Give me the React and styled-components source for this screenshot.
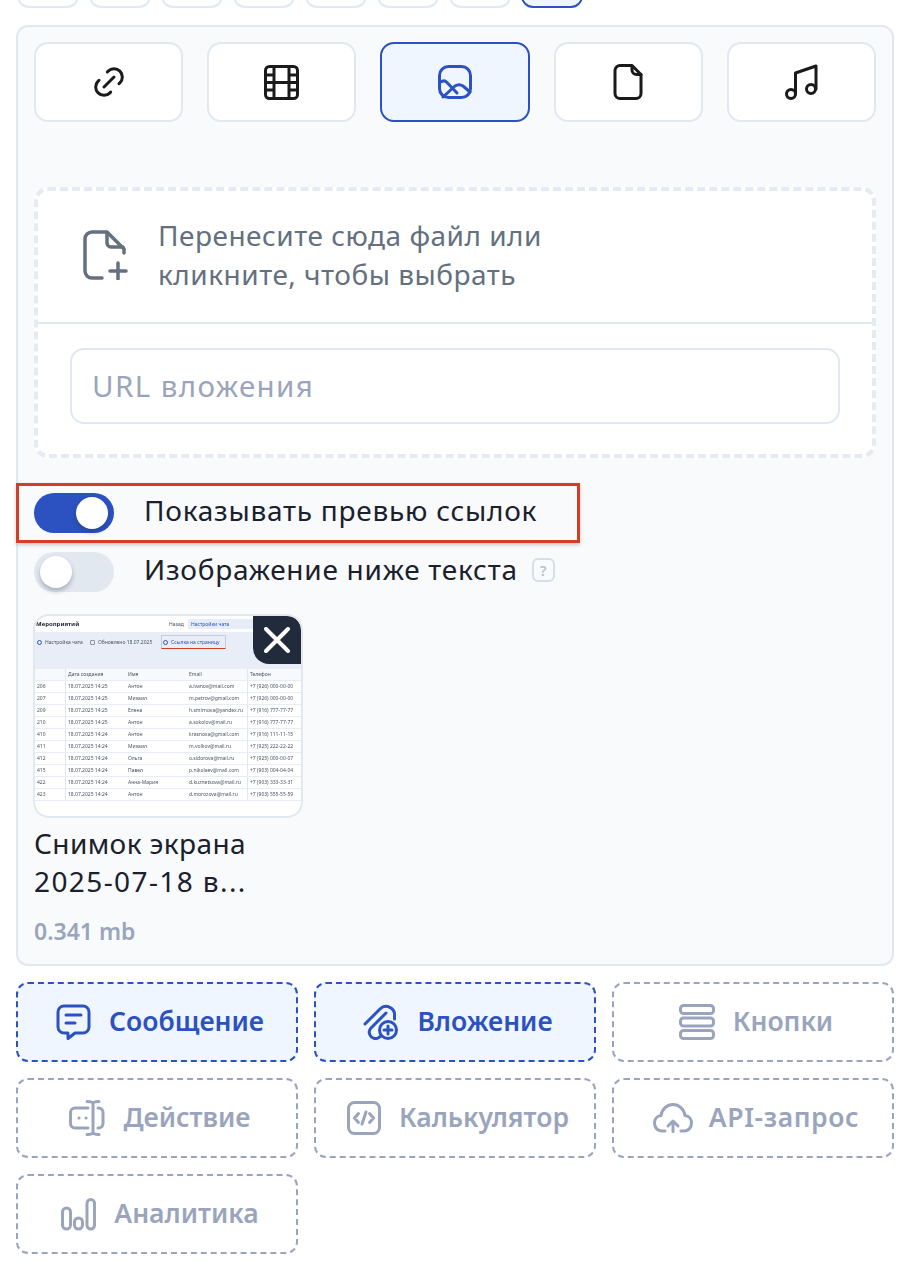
import styled, { createGlobalStyle } from "styled-components";

const BLUE = "#2b52c0";
const GREY = "#9aa5bd";

const GlobalStyle = createGlobalStyle`
  html, body {
    margin: 0;
    padding: 0;
    background: #fff;
  }
  * { box-sizing: border-box; }
  body {
    font-family: "Noto Sans", "Open Sans", sans-serif;
    color: #1a202c;
  }
`;

const Page = styled.div`
  width: 918px;
  height: 1288px;
  padding: 0 24px 0 16px;
  overflow: hidden;
`;

const TabStrip = styled.div`
  height: 8px;
  display: flex;
  align-items: flex-end;
  gap: 10px;
  padding-left: 1px;
  overflow: hidden;
`;

const Tab = styled.div`
  flex: none;
  width: 62px;
  height: 30px;
  border-radius: 12px;
  border: 2px solid ${(p) => (p.$active ? BLUE : "#e2e8f0")};
  background: ${(p) => (p.$active ? "#eff6ff" : "#fff")};
`;

const Panel = styled.div`
  margin-top: 17px;
  height: 941px;
  padding: 15px 16px 0;
  border: 2px solid #e2e8f0;
  border-radius: 12px;
  background: #f8fafc;
`;

const TypeRow = styled.div`
  display: flex;
  gap: 24px;
`;

const TypeButton = styled.div`
  flex: 1;
  height: 80px;
  display: flex;
  align-items: center;
  justify-content: center;
  border-radius: 14px;
  border: 2px solid ${(p) => (p.$active ? BLUE : "#e2e8f0")};
  background: ${(p) => (p.$active ? "#eff6ff" : "#fff")};
  color: ${(p) => (p.$active ? BLUE : "#1a1a1a")};
`;

const DropZone = styled.div`
  margin-top: 65px;
  height: 271px;
  border: 4px dashed #e6eaf2;
  border-radius: 14px;
  background: #fff;
`;

const DropTop = styled.div`
  height: 133px;
  display: flex;
  align-items: center;
  gap: 30px;
  padding: 0 0 4px 45px;
  border-bottom: 2px solid #e2e8f0;
  color: #64707f;
`;

const DropText = styled.div`
  font-size: 28px;
  line-height: 38.5px;
  letter-spacing: 0.5px;
  color: #64707f;
`;

const UrlInput = styled.div`
  margin: 24px 32px 0;
  height: 76px;
  display: flex;
  align-items: center;
  padding: 0 20px 2px;
  border: 2px solid #e2e8f0;
  border-radius: 14px;
  font-size: 29.5px;
  letter-spacing: 1.4px;
  color: ${GREY};
`;

const ToggleList = styled.div`
  margin-top: 35px;
  display: flex;
  flex-direction: column;
  gap: 19px;
`;

const ToggleRow = styled.div`
  position: relative;
  height: 40px;
  display: flex;
  align-items: center;
  gap: 30px;
`;

const Toggle = styled.div`
  position: relative;
  flex: none;
  width: 80px;
  height: 40px;
  border-radius: 20px;
  background: ${(p) => (p.$on ? BLUE : "#e2e8f0")};
`;

const Knob = styled.div`
  position: absolute;
  top: 4px;
  left: ${(p) => (p.$on ? "42px" : "6px")};
  width: 32px;
  height: 32px;
  border-radius: 50%;
  background: #fff;
  box-shadow: 0 3px 5px rgba(30, 41, 59, 0.3);
`;

const ToggleLabel = styled.span`
  margin-top: -6px;
  font-size: 28px;
  line-height: 38px;
  letter-spacing: 0.75px;
  color: #1a202c;
`;

const HelpMark = styled.span`
  flex: none;
  width: 23px;
  height: 24px;
  margin: -4px 0 0 -16px;
  display: flex;
  align-items: center;
  justify-content: center;
  border: 2px solid #d5dde8;
  border-radius: 6px;
  font-size: 14px;
  font-weight: 600;
  color: #b4bfce;
`;

const Annotation = styled.div`
  position: absolute;
  left: -18px;
  top: -10px;
  width: 564px;
  height: 60px;
  border: 3px solid #d23f26;
  box-shadow: 0 2px 4px rgba(0, 0, 0, 0.2);
  pointer-events: none;
`;

const Thumb = styled.div`
  position: relative;
  margin: 22px 0 0 -1px;
  width: 270px;
  height: 204px;
  border: 2px solid #e2e8f0;
  border-radius: 16px;
  background: #fff;
  overflow: hidden;
`;

const ThumbShot = styled.div`
  font-size: 5px;
  line-height: 11px;
  white-space: nowrap;
  color: #4a5463;
  filter: blur(0.35px);
`;

const ThumbTop = styled.div`
  height: 16px;
  display: flex;
  align-items: center;
  padding-left: 1px;
  font-size: 6px;
`;

const ThumbTitle = styled.span`
  width: 133px;
  font-weight: 700;
  color: #1a202c;
`;

const ThumbBack = styled.span`
  width: 19px;
  font-size: 5px;
`;

const ThumbChip = styled.span`
  width: 66px;
  padding-left: 3px;
  background: #e6ecf8;
  color: #2b52c0;
  font-size: 5px;
  line-height: 10px;
`;

const ThumbBand = styled.div`
  height: 37px;
  padding: 3px 0 0 1px;
  display: flex;
  align-items: flex-start;
  background: #e8edf7;
`;

const ThumbAction = styled.span`
  width: ${(p) => p.$w}px;
  height: 14px;
  display: flex;
  align-items: center;
  gap: 3px;
  padding-left: 1px;
  ${(p) => (p.$marked ? "border: 1px solid #c4ccd9; border-bottom: 1px solid #d23f26; color: #2b52c0;" : "")}
`;

const ThumbDot = styled.i`
  flex: none;
  width: 5px;
  height: 5px;
  border: 1px solid ${(p) => p.$color};
  border-radius: ${(p) => (p.$square ? "1px" : "50%")};
`;

const ThumbRow = styled.div`
  display: grid;
  grid-template-columns: 30px 61px 61px 60px 1fr;
  height: 12px;
  background: ${(p) => (p.$head ? "#f7f9fc" : "#fff")};
  border-bottom: 1px solid #e8edf5;
`;

const ThumbCell = styled.span`
  overflow: hidden;
  padding-left: 2px;
  &:nth-child(2), &:nth-child(5) {
    border-left: 1px solid #e1e6f0;
  }
`;

const CloseButton = styled.div`
  position: absolute;
  top: 0;
  right: 0;
  width: 48px;
  height: 48px;
  display: flex;
  align-items: center;
  justify-content: center;
  background: #222b3c;
  border-radius: 0 14px 0 16px;
  color: #fff;
`;

const FileName = styled.div`
  margin-top: 6px;
  font-size: 28px;
  line-height: 38px;
  letter-spacing: 0.4px;
  color: #1a202c;
`;

const FileDate = styled.span`
  letter-spacing: 1.4px;
`;

const FileSize = styled.div`
  margin-top: 16px;
  font-size: 23px;
  line-height: 30px;
  font-weight: 600;
  color: ${GREY};
`;

const BlockGrid = styled.div`
  margin-top: 16px;
  display: grid;
  grid-template-columns: repeat(3, 1fr);
  grid-auto-rows: 80px;
  gap: 16px;
`;

const BlockButton = styled.div`
  display: flex;
  align-items: center;
  justify-content: center;
  gap: 18px;
  padding-left: 6px;
  border: 2px dashed ${(p) => (p.$active ? BLUE : GREY)};
  border-radius: 12px;
  background: ${(p) => (p.$active ? "#eff6ff" : "#fff")};
  color: ${(p) => (p.$active ? BLUE : GREY)};
  font-size: 26.5px;
  font-weight: 600;
`;

const BlockLabel = styled.span`
  margin-top: -3px;
  letter-spacing: ${(p) => (p.$wide ? "0.6px" : "0")};
  margin-left: ${(p) => (p.$wide ? "-2px" : "0")};
`;

function Svg({ w, h, vw, vh, sw = 3, children }) {
  return (
    <svg width={w} height={h} viewBox={`0 0 ${vw || w} ${vh || h}`} fill="none" stroke="currentColor"
      strokeWidth={sw} strokeLinecap="round" strokeLinejoin="round" style={{ flex: "none" }}>
      {children}
    </svg>
  );
}

const LinkIcon = () => (
  <Svg w={40} h={40} vw={24} vh={24} sw={1.8}>
    <path d="M9 15l6-6" />
    <path d="M11 6l.463-.536a5 5 0 0 1 7.071 7.072L18 13" />
    <path d="M13 18l-.397.534a5.068 5.068 0 0 1-7.127 0a4.972 4.972 0 0 1 0-7.071L6 11" />
  </Svg>
);

const FilmIcon = () => (
  <Svg w={35} h={35}>
    <rect x="1.5" y="1.5" width="32" height="32" rx="4" />
    <path d="M10 2V33M25 2V33M10 17.5H25M2 10H10M2 17.5H10M2 25H10M25 10H33M25 17.5H33M25 25H33" />
  </Svg>
);

const ImageIcon = () => (
  <Svg w={34} h={34}>
    <rect x="1.5" y="1.5" width="31" height="31" rx="9" />
    <path d="M2 17L5 16Q7 15.500 8.500 17L19 28" />
    <path d="M5 32L17 21Q21 18.500 25 21L32 27" />
  </Svg>
);

const FileIcon = () => (
  <Svg w={30} h={36}>
    <path d="M19 1.5H7A5 5 0 0 0 2 6.5V29.500A5 5 0 0 0 7 34.500H23A5 5 0 0 0 28 29.500V10.500Z" />
    <path d="M19 2V6A4.500 4.500 0 0 0 23.500 10.500H28" />
  </Svg>
);

const MusicIcon = () => (
  <Svg w={34} h={36}>
    <circle cx="7" cy="30" r="4.500" />
    <circle cx="27" cy="25" r="4.500" />
    <path d="M11.500 30V9L32 2V25" />
  </Svg>
);

const FilePlusIcon = () => (
  <Svg w={45} h={50} sw={3.5}>
    <path d="M19 48H9A7 7 0 0 1 2 41V9A7 7 0 0 1 9 2H24L41 19V23" />
    <path d="M24 3V13A4 4 0 0 0 28 17H40" />
    <path d="M27 41H43M35 33V49" />
  </Svg>
);

const MessageIcon = () => (
  <Svg w={35} h={36}>
    <path d="M8 2H27A6 6 0 0 1 33 8V23A6 6 0 0 1 27 29H19L12 34.500V29H8A6 6 0 0 1 2 23V8A6 6 0 0 1 8 2Z" />
    <path d="M10 11H25M10 19H19" />
  </Svg>
);

const AttachIcon = () => (
  <Svg w={36} h={36}>
    <path d="M2 20L17 5A8.500 8.500 0 0 1 31.500 12V15" />
    <path d="M23 9L8 24A6 6 0 0 0 7 31A6 6 0 0 0 15 34L18 32" />
    <circle cx="25" cy="26" r="8.500" />
    <path d="M25 22V30M21 26H29" />
  </Svg>
);

const RowsIcon = () => (
  <Svg w={36} h={36}>
    <rect x="1.500" y="1.500" width="33" height="8" rx="3" />
    <rect x="1.500" y="14" width="33" height="8" rx="3" />
    <rect x="1.500" y="26.500" width="33" height="8" rx="3" />
  </Svg>
);

const ActionIcon = () => (
  <Svg w={36} h={36}>
    <path d="M19 8H6A4.500 4.500 0 0 0 1.500 12.500V23.500A4.500 4.500 0 0 0 6 28H19" />
    <path d="M29 8H29.500A4.500 4.500 0 0 1 34 12.500V23.500A4.500 4.500 0 0 1 29.500 28H29" />
    <path d="M24 4V32M18 1.500C21 1.500 24 2 24 4C24 2 27 1.500 30 1.500M18 34.500C21 34.500 24 34 24 32C24 34 27 34.500 30 34.500" />
    <path d="M10 18H10.100M17 18H17.100" />
  </Svg>
);

const CodeIcon = () => (
  <Svg w={34} h={34}>
    <rect x="1.500" y="1.500" width="31" height="31" rx="6" />
    <path d="M11.500 12.500L7.500 17L11.500 21.500M22.500 12.500L26.500 17L22.500 21.500M19 11L15 23" />
  </Svg>
);

const CloudIcon = () => (
  <Svg w={40} h={30}>
    <path d="M12 28H9C4 28 1.500 24 1.500 20C1.500 16 4 13 8 12.500C9 6 14 1.500 20 1.500C26 1.500 31 6 32 12.500C36 13 38.500 16 38.500 20C38.500 24 36 28 31 28H28" />
    <path d="M20 28.500V18M15 23L20 18L25 23" />
  </Svg>
);

const BarsIcon = () => (
  <Svg w={35} h={33}>
    <rect x="1.500" y="10" width="8" height="21" rx="4" />
    <rect x="13.500" y="20" width="8" height="11" rx="4" />
    <rect x="26" y="1.500" width="7.500" height="29.500" rx="3.700" />
  </Svg>
);

const CrossIcon = () => (
  <Svg w={26} h={26} sw={4}>
    <path d="M2 2L24 24M24 2L2 24" />
  </Svg>
);

const tableRows = [
  ["206", "18.07.2025 14:25", "Антон", "a.ivanov@mail.com", "+7 (926) 000-00-00"],
  ["207", "18.07.2025 14:25", "Михаил", "m.petrov@gmail.com", "+7 (926) 000-00-00"],
  ["209", "18.07.2025 14:25", "Елена", "h.smirnova@yandex.ru", "+7 (916) 777-77-77"],
  ["210", "18.07.2025 14:25", "Антон", "a.sokolov@mail.ru", "+7 (916) 777-77-77"],
  ["410", "18.07.2025 14:24", "Антон", "krasnova@gmail.com", "+7 (916) 111-11-15"],
  ["411", "18.07.2025 14:24", "Михаил", "m.volkov@mail.ru", "+7 (925) 222-22-22"],
  ["412", "18.07.2025 14:24", "Ольга", "o.sidorova@mail.ru", "+7 (925) 000-00-07"],
  ["415", "18.07.2025 14:24", "Павел", "p.nikolaev@mail.com", "+7 (903) 004-04-04"],
  ["422", "18.07.2025 14:24", "Анна-Мария", "d.kuznetsova@mail.ru", "+7 (903) 333-33-31"],
  ["423", "18.07.2025 14:24", "Антон", "d.morozova@mail.ru", "+7 (903) 555-55-59"],
];

const blocks = [
  { label: "Сообщение", icon: <MessageIcon />, active: true },
  { label: "Вложение", icon: <AttachIcon />, active: true },
  { label: "Кнопки", icon: <RowsIcon /> },
  { label: "Действие", icon: <ActionIcon /> },
  { label: "Калькулятор", icon: <CodeIcon /> },
  { label: "API-запрос", icon: <CloudIcon />, wide: true },
  { label: "Аналитика", icon: <BarsIcon /> },
];

export default function App() {
  return (
    <Page>
      <GlobalStyle />
      <TabStrip>
        {[0, 1, 2, 3, 4, 5, 6, 7].map((i) => (
          <Tab key={i} $active={i === 7} />
        ))}
      </TabStrip>

      <Panel>
        <TypeRow>
          <TypeButton><LinkIcon /></TypeButton>
          <TypeButton><FilmIcon /></TypeButton>
          <TypeButton $active><ImageIcon /></TypeButton>
          <TypeButton><FileIcon /></TypeButton>
          <TypeButton><MusicIcon /></TypeButton>
        </TypeRow>

        <DropZone>
          <DropTop>
            <FilePlusIcon />
            <DropText>Перенесите сюда файл или<br />кликните, чтобы выбрать</DropText>
          </DropTop>
          <UrlInput>URL вложения</UrlInput>
        </DropZone>

        <ToggleList>
          <ToggleRow>
            <Toggle $on><Knob $on /></Toggle>
            <ToggleLabel>Показывать превью ссылок</ToggleLabel>
            <Annotation />
          </ToggleRow>
          <ToggleRow>
            <Toggle><Knob /></Toggle>
            <ToggleLabel>Изображение ниже текста</ToggleLabel>
            <HelpMark>?</HelpMark>
          </ToggleRow>
        </ToggleList>

        <Thumb>
          <ThumbShot>
            <ThumbTop>
              <ThumbTitle>Мероприятий</ThumbTitle>
              <ThumbBack>Назад</ThumbBack>
              <ThumbChip>Настройки чата</ThumbChip>
            </ThumbTop>
            <ThumbBand>
              <ThumbAction $w={53}><ThumbDot $color={BLUE} />Настройка чата</ThumbAction>
              <ThumbAction $w={72}><ThumbDot $color="#8a94a6" $square />Обновлено 18.07.2025</ThumbAction>
              <ThumbAction $w={65} $marked><ThumbDot $color={BLUE} />Ссылка на страницу</ThumbAction>
            </ThumbBand>
            <ThumbRow $head>
              <ThumbCell />
              <ThumbCell>Дата создания</ThumbCell>
              <ThumbCell>Имя</ThumbCell>
              <ThumbCell>Email</ThumbCell>
              <ThumbCell>Телефон</ThumbCell>
            </ThumbRow>
            {tableRows.map((row) => (
              <ThumbRow key={row[0]}>
                {row.map((cell, i) => (
                  <ThumbCell key={i}>{cell}</ThumbCell>
                ))}
              </ThumbRow>
            ))}
          </ThumbShot>
          <CloseButton><CrossIcon /></CloseButton>
        </Thumb>

        <FileName>Снимок экрана<br /><FileDate>2025-07-18 в...</FileDate></FileName>
        <FileSize>0.341 mb</FileSize>
      </Panel>

      <BlockGrid>
        {blocks.map((b) => (
          <BlockButton key={b.label} $active={b.active}>
            {b.icon}
            <BlockLabel $wide={b.wide}>{b.label}</BlockLabel>
          </BlockButton>
        ))}
      </BlockGrid>
    </Page>
  );
}
